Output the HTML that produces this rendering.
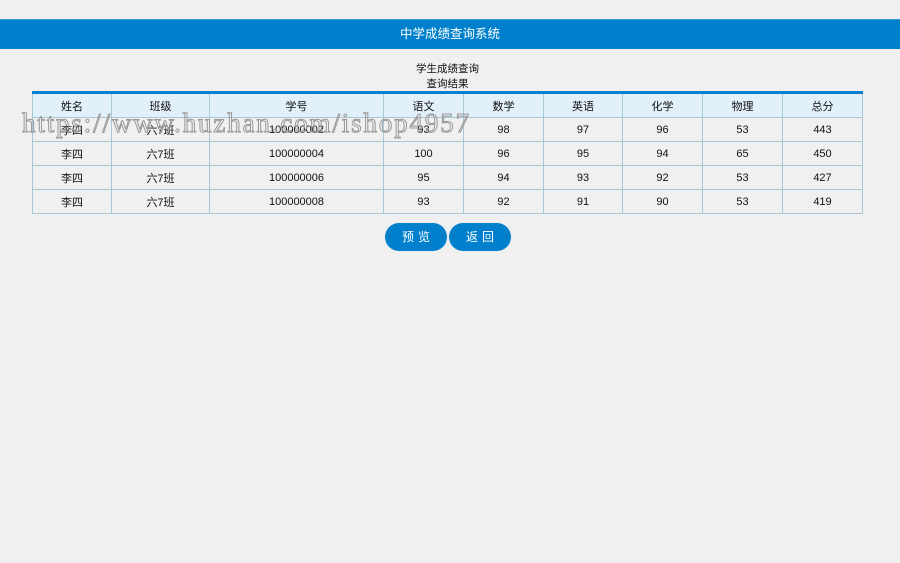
<!DOCTYPE html>
<html><head><meta charset="utf-8"><style>
body{margin:0;width:900px;height:563px;background:#f0f0f0;font-family:"Liberation Sans","Noto Sans CJK SC",sans-serif;position:relative;overflow:hidden}
.hdr{position:absolute;top:19px;left:0;width:900px;height:30px;background:#0080cc;border-top:1px solid #3a9ad8;box-sizing:border-box;color:#fff;font-size:12.5px;text-align:center;line-height:29px}
.t1{position:absolute;top:61px;left:0;width:895px;text-align:center;font-size:10.5px;color:#111}
.t2{position:absolute;top:76px;left:0;width:895px;text-align:center;font-size:10.5px;color:#111}
table{position:absolute;top:91px;left:32px;width:831px;border-collapse:collapse;border-top:3px solid #0a7fd0;font-size:11px;color:#111}
td,th{border:1px solid #a8c8d8;text-align:center;height:23px;padding:0;font-weight:normal}
th{background:#e2f0f9}
.btn{position:absolute;top:223px;width:62px;height:28px;border-radius:14px;background:#0080cc;color:#fff;font-size:12px;text-align:center;line-height:28px;letter-spacing:4px;text-indent:4px}
.wm{position:absolute;left:22px;top:108px;font-family:"Liberation Serif",serif;font-size:27px;color:transparent;-webkit-text-stroke:1px #999;letter-spacing:1.85px;white-space:nowrap}
</style></head><body>
<div class="hdr">中学成绩查询系统</div>
<div class="t1">学生成绩查询</div>
<div class="t2">查询结果</div>
<table>
<colgroup><col style="width:79px"><col style="width:98px"><col style="width:174px"><col style="width:80px"><col style="width:80px"><col style="width:79px"><col style="width:80px"><col style="width:80px"><col style="width:80px"></colgroup>
<tr><th>姓名</th><th>班级</th><th>学号</th><th>语文</th><th>数学</th><th>英语</th><th>化学</th><th>物理</th><th>总分</th></tr>
<tr><td>李四</td><td>六7班</td><td>100000002</td><td>93</td><td>98</td><td>97</td><td>96</td><td>53</td><td>443</td></tr>
<tr><td>李四</td><td>六7班</td><td>100000004</td><td>100</td><td>96</td><td>95</td><td>94</td><td>65</td><td>450</td></tr>
<tr><td>李四</td><td>六7班</td><td>100000006</td><td>95</td><td>94</td><td>93</td><td>92</td><td>53</td><td>427</td></tr>
<tr><td>李四</td><td>六7班</td><td>100000008</td><td>93</td><td>92</td><td>91</td><td>90</td><td>53</td><td>419</td></tr>
</table>
<div class="btn" style="left:385px">预览</div>
<div class="btn" style="left:449px">返回</div>
<div class="wm">https://www.huzhan.com/ishop4957</div>
</body></html>
